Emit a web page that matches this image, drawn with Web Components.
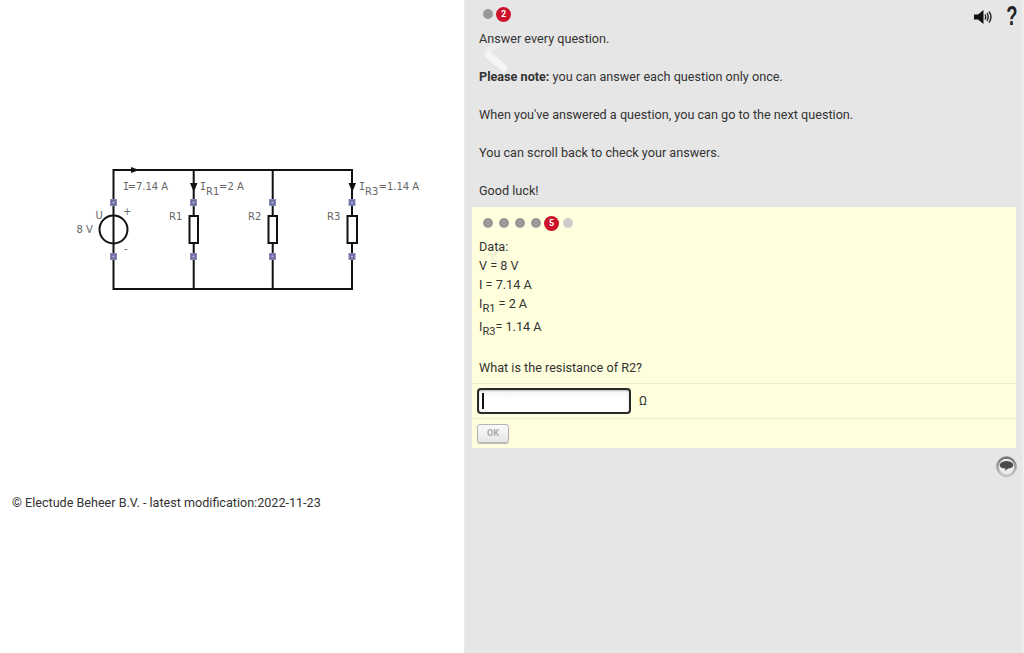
<!DOCTYPE html>
<html lang="en"><head><meta charset="utf-8"><title>Question</title>
<style>
html,body{margin:0;height:100%}
body{width:1024px;height:653px;overflow:hidden;font-family:Roboto,"Liberation Sans",sans-serif;font-size:12.65px;color:#333}
</style></head><body>
<lesson-page></lesson-page>
<template id="t-page"><style>
:host{display:grid;grid-template-columns:464px 560px;height:653px}
</style><circuit-pane></circuit-pane><question-pane></question-pane></template>

<template id="t-circuit"><style>
:host{display:block;background:#fff;position:relative;height:653px}
svg{display:block;position:absolute;left:60px;top:150px}
text{font-family:"DejaVu Sans",sans-serif;font-size:10px;fill:#666}
.m{font-family:"DejaVu Sans Mono",monospace}
footer{padding:495px 0 0 12px;font-size:12.6px;line-height:16px;color:#333}
</style>
<svg width="370" height="150" viewBox="60 150 370 150" aria-label="Circuit diagram">
<g fill="none" stroke="#111" stroke-width="2">
<path d="M113.500 202V170H352V202"/><path d="M113.500 256V289H352V256"/>
<path d="M193.700 170V216M193.700 243V289M272.700 170V216M272.700 243V289M113.500 202V256M352 170V216M352 243V289"/>
<circle cx="113.500" cy="229.500" r="14"/>
<rect x="189.500" y="216" width="8.500" height="27"/><rect x="268.500" y="216" width="8.500" height="27"/><rect x="347.500" y="216" width="9.500" height="27"/>
</g>
<g fill="#111"><path d="M131 167l8 3-8 3z"/><path d="M190 183h7.500l-3.700 9zM348.500 183h7.500l-3.700 9z"/></g>
<g fill="#6a6aa0" stroke="#8a8ab8" stroke-width="1">
<rect x="110.500" y="199.500" width="6" height="6"/><rect x="110.500" y="253.500" width="6" height="6"/>
<rect x="190.500" y="199.500" width="6" height="6"/><rect x="190.500" y="253.500" width="6" height="6"/>
<rect x="269.500" y="199.500" width="6" height="6"/><rect x="269.500" y="253.500" width="6" height="6"/>
<rect x="349" y="199.500" width="6" height="6"/><rect x="349" y="253.500" width="6" height="6"/>
</g>
<g fill="#b4b4d4">
<rect x="112.500" y="201.500" width="2" height="2"/><rect x="112.500" y="255.500" width="2" height="2"/>
<rect x="192.500" y="201.500" width="2" height="2"/><rect x="192.500" y="255.500" width="2" height="2"/>
<rect x="271.500" y="201.500" width="2" height="2"/><rect x="271.500" y="255.500" width="2" height="2"/>
<rect x="351" y="201.500" width="2" height="2"/><rect x="351" y="255.500" width="2" height="2"/>
</g>
<text x="123" y="190"><tspan class="m">I</tspan><tspan dx="-1.500">=7.14 A</tspan></text>
<text x="200" y="190" class="m">I</text><text x="206" y="195">R1</text><text x="219" y="190">=2 A</text>
<text x="359" y="190" class="m">I</text><text x="365" y="195">R3</text><text x="378.500" y="190">=1.14 A</text>
<text x="95.500" y="218.500">U</text><text x="123" y="215">+</text><text x="124" y="252">-</text><text x="76.500" y="233">8 V</text>
<text x="169" y="220">R1</text><text x="248" y="220">R2</text><text x="327" y="220">R3</text>
</svg>
<footer>© Electude Beheer B.V. - latest modification:2022-11-23</footer></template>

<template id="t-dots"><style>
:host{display:flex;align-items:center;gap:6px;height:14px}
::slotted(i){width:10px;height:10px;border-radius:50%;background:#999}
::slotted(i.l){background:#ccc}
::slotted(b){width:15px;height:15px;margin:0 -2.500px;border-radius:50%;background:#cc1228;color:#fff;font:700 9px/15px Roboto,sans-serif;text-align:center}
</style><slot></slot></template>

<template id="t-question"><style>
:host{display:block;background:#e6e6e6;height:653px;position:relative;color:#333;box-shadow:inset 1px 0 #ececec,inset -2px 0 #eeeeee}
.top{display:flex;justify-content:space-between;padding:7px 7px 0 18.500px;height:29px;box-sizing:border-box}
.tools{display:flex;gap:9px;align-items:flex-start;margin-top:-5px}
.q{display:inline-block;font:700 27px/29px "Liberation Sans",sans-serif;color:#222;transform:scaleX(.68);transform-origin:100% 50%}
.tools svg{margin-top:8px}
.intro{position:relative;padding:0 8px 0 15px;height:178px;box-sizing:border-box}
.intro p{margin:0 0 19px;line-height:19px;height:19px}
b{font-weight:700}
.box{display:block;margin:0 8px;background:#ffffdd;height:241px}
.chev{position:absolute;left:14px;top:30px;pointer-events:none}
.comment{position:absolute;left:532px;top:456px}
</style>
<div class="top"><dot-row><i></i><b>2</b></dot-row>
<div class="tools"><svg width="18" height="15" viewBox="0 0 18 15" aria-label="Sound"><path d="M0 4.500h4L9.500 0v14L4 9.500H0z" fill="#111"/><path d="M11 4.500q1.500 2.500 0 5M13 3q2.500 4 0 8M15 1.500q4 5.500 0 11" fill="none" stroke="#222" stroke-width="1.400"/></svg><span class="q">?</span></div></div>
<svg class="chev" width="36" height="46"><path d="M28 7L8 23" fill="none" stroke="#ececec" stroke-width="7"/><path d="M8 23l20 17" fill="none" stroke="#f5f5f5" stroke-width="7"/></svg>
<div class="intro"><p>Answer every question.</p><p><b>Please note:</b> you can answer each question only once.</p><p>When you've answered a question, you can go to the next question.</p><p>You can scroll back to check your answers.</p><p>Good luck!</p></div>
<question-box class="box"></question-box>
<svg class="comment" width="22" height="22" viewBox="0 0 22 22" aria-label="Comment"><defs><linearGradient id="cg" x1="0" y1="0" x2="0" y2="1"><stop offset="0" stop-color="#666"/><stop offset="1" stop-color="#d8d8d8"/></linearGradient></defs><circle cx="10.500" cy="10.500" r="10" fill="url(#cg)" stroke="#999" stroke-width=".6"/><circle cx="10.500" cy="10.500" r="7.800" fill="#ececec"/><path d="M3.500 9c1-3 4-4 7-4s6 1 7 4c-.5 2.500-3 3.500-5.500 3.500L9 15l.5-2.500C6 12.500 4 11.500 3.500 9z" fill="#4a4a4a"/></svg>
</template>

<template id="t-box"><style>
:host{display:block;position:relative}
.dots{padding:9px 0 0 10.500px;height:26px;box-sizing:border-box}
.data{position:relative;padding:4px 7px 0;line-height:19px;height:150px;box-sizing:border-box}
.data div{height:19px}
sub{font-size:11px;line-height:0;vertical-align:-4px}
.ir3{margin-top:4px}
.ask{margin-top:22px}
.row{border-top:1px solid #eeeecc;display:flex;align-items:center;box-sizing:border-box;padding-left:5px}
.ans{height:35px;gap:8px;font-size:12px}
.btnrow{height:30px;padding-bottom:1px}
.input{width:147px;height:22px;border:2px solid #2a2a2a;border-radius:4px;background:linear-gradient(#f4f4f4,#fff 40%);box-shadow:inset 0 1px 2px #bbb;display:flex;align-items:center;padding-left:3px;box-sizing:content-box;margin:0}
.input::before{content:"";width:1.500px;height:16px;background:#111}
button{width:32px;height:19px;border:1px solid #b4b4b4;border-radius:3px;background:linear-gradient(#fafafa,#e6e6e6);box-shadow:0 1px 1px #bbb;color:#aaa;font:700 9px Roboto,sans-serif;padding:0}
.chev{position:absolute;left:16px;top:36px;pointer-events:none}
</style>
<div class="dots"><dot-row><i></i><i></i><i></i><i></i><b>5</b><i class="l"></i></dot-row></div>
<svg class="chev" width="24" height="32"><path d="M12 5L4 15l9 10" fill="none" stroke="#f3f3d6" stroke-width="3.500"/></svg>
<div class="data"><div>Data:</div><div>V = 8 V</div><div>I = 7.14 A</div><div>I<sub>R1</sub> = 2 A</div><div class="ir3">I<sub>R3</sub>= 1.14 A</div><div class="ask">What is the resistance of R2?</div></div>
<div class="row ans"><div class="input"></div><span>Ω</span></div>
<div class="row btnrow"><button>OK</button></div></template>

<script>
function def(name,tpl){customElements.define(name,class extends HTMLElement{constructor(){super();this.attachShadow({mode:"open"}).appendChild(document.getElementById(tpl).content.cloneNode(true));}});}
def("dot-row","t-dots");def("question-box","t-box");def("question-pane","t-question");def("circuit-pane","t-circuit");def("lesson-page","t-page");
</script>
</body></html>
